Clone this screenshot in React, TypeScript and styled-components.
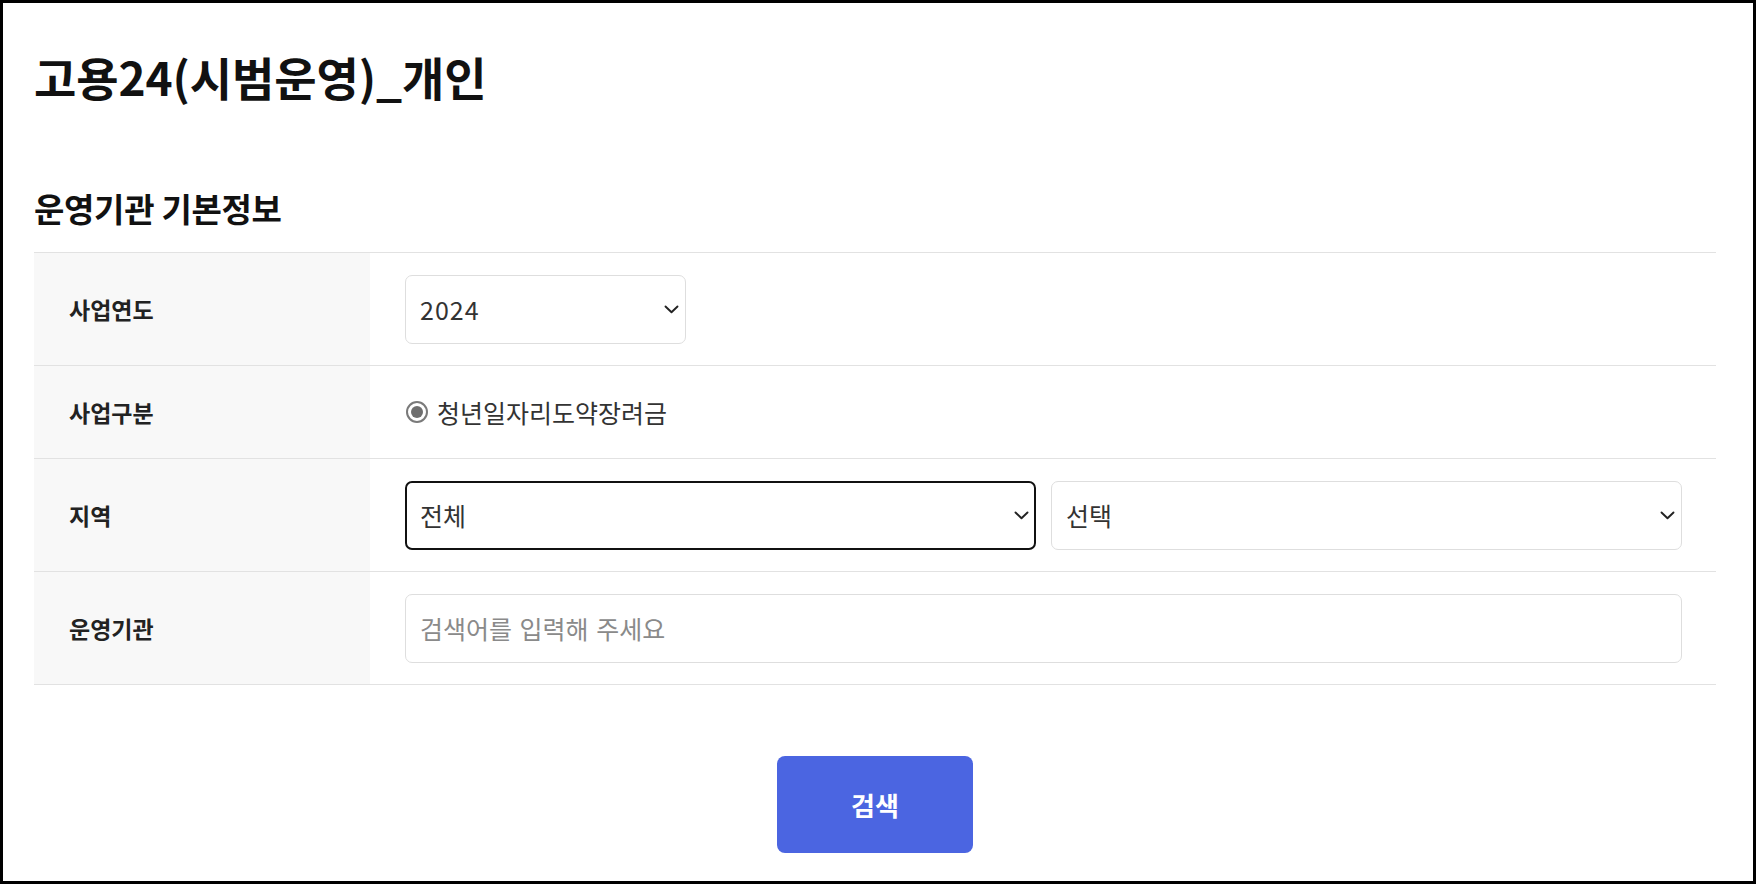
import React from "react";
import styled, { createGlobalStyle } from "styled-components";

const GlobalStyle = createGlobalStyle`
  html, body { margin: 0; padding: 0; background: #fff; }
  * { box-sizing: border-box; }
  body { font-family: "Noto Sans CJK KR", "Noto Sans", sans-serif; color: #222; }
`;

const Page = styled.div`
  width: 100vw;
  height: 100vh;
  border: 3px solid #000;
  padding: 0 37px 0 31px;
  display: flex;
  flex-direction: column;
  background: #fff;
`;

const Title = styled.h1`
  margin: 45px 0 0;
  font-size: 46px;
  line-height: 56px;
  font-weight: 700;
  color: #111;
  letter-spacing: -0.1px;
`;

const SectionTitle = styled.h2`
  margin: 85px 0 25px;
  font-size: 33px;
  line-height: 38px;
  font-weight: 700;
  color: #111;
  letter-spacing: -0.3px;
`;

const Table = styled.div`
  border-top: 1px solid #e2e2e2;
`;

const Row = styled.div<{ $h: number }>`
  display: grid;
  grid-template-columns: 336px 1fr;
  height: ${(p) => p.$h}px;
  border-bottom: 1px solid #e2e2e2;
`;

const Label = styled.div`
  background: #f8f8f8;
  display: flex;
  align-items: center;
  padding-left: 35px;
  font-size: 23px;
  font-weight: 600;
  color: #222;
`;

const Cell = styled.div`
  display: flex;
  align-items: center;
  gap: 15px;
  padding: 0 34px 0 35px;
`;

const SelectBox = styled.div<{ $w?: number; $focused?: boolean }>`
  height: 69px;
  ${(p) => (p.$w ? `width: ${p.$w}px;` : "flex: 1;")}
  border: ${(p) => (p.$focused ? "2px solid #111" : "1px solid #dedede")};
  border-radius: 7px;
  display: flex;
  align-items: center;
  justify-content: space-between;
  padding: 0 ${(p) => (p.$focused ? 5 : 6)}px 0 ${(p) => (p.$focused ? 13 : 14)}px;
  font-size: 25px;
  color: #333;
  background: #fff;
`;

const SelectValue = styled.span<{ $num?: boolean }>`
  letter-spacing: ${(p) => (p.$num ? "1px" : "0")};
`;

const Chevron = () => (
  <svg width="15" height="9" viewBox="0 0 15 9" fill="none">
    <path d="M1.5 1.5 L7.5 7.3 L13.5 1.5" stroke="#222" strokeWidth="1.9" strokeLinecap="round" strokeLinejoin="round" />
  </svg>
);

const RadioLabel = styled.label`
  display: flex;
  align-items: center;
  gap: 9px;
  font-size: 25px;
  color: #333;
`;

const RadioDot = styled.span`
  width: 22px;
  height: 22px;
  border-radius: 50%;
  border: 2px solid #7a7a7a;
  display: flex;
  align-items: center;
  justify-content: center;
  margin-left: 1px;
  &::after {
    content: "";
    width: 12px;
    height: 12px;
    border-radius: 50%;
    background: #6e6e6e;
  }
`;

const TextInput = styled.input`
  flex: 1;
  height: 69px;
  border: 1px solid #dedede;
  border-radius: 7px;
  padding: 0 14px;
  font-family: "Noto Sans CJK KR", "Noto Sans", sans-serif;
  font-size: 25px;
  word-spacing: 2px;
  color: #333;
  outline: none;
  &::placeholder { color: #8a8a8a; }
`;

const Actions = styled.div`
  display: flex;
  justify-content: center;
  margin-top: 71px;
`;

const SearchButton = styled.button`
  width: 196px;
  height: 97px;
  border: none;
  border-radius: 8px;
  background: #4b65e1;
  color: #fff;
  font-family: "Noto Sans CJK KR", "Noto Sans", sans-serif;
  font-size: 26px;
  font-weight: 700;
  cursor: pointer;
`;

export default function App() {
  return (
    <>
      <GlobalStyle />
      <Page>
        <Title>고용24(시범운영)_개인</Title>
        <SectionTitle>운영기관 기본정보</SectionTitle>
        <Table>
          <Row $h={113}>
            <Label>사업연도</Label>
            <Cell>
              <SelectBox $w={281}>
                <SelectValue $num>2024</SelectValue>
                <Chevron />
              </SelectBox>
            </Cell>
          </Row>
          <Row $h={93}>
            <Label>사업구분</Label>
            <Cell>
              <RadioLabel>
                <RadioDot />
                청년일자리도약장려금
              </RadioLabel>
            </Cell>
          </Row>
          <Row $h={113}>
            <Label>지역</Label>
            <Cell>
              <SelectBox $focused>
                <SelectValue>전체</SelectValue>
                <Chevron />
              </SelectBox>
              <SelectBox>
                <SelectValue>선택</SelectValue>
                <Chevron />
              </SelectBox>
            </Cell>
          </Row>
          <Row $h={113}>
            <Label>운영기관</Label>
            <Cell>
              <TextInput placeholder="검색어를 입력해 주세요" />
            </Cell>
          </Row>
        </Table>
        <Actions>
          <SearchButton>검색</SearchButton>
        </Actions>
      </Page>
    </>
  );
}
